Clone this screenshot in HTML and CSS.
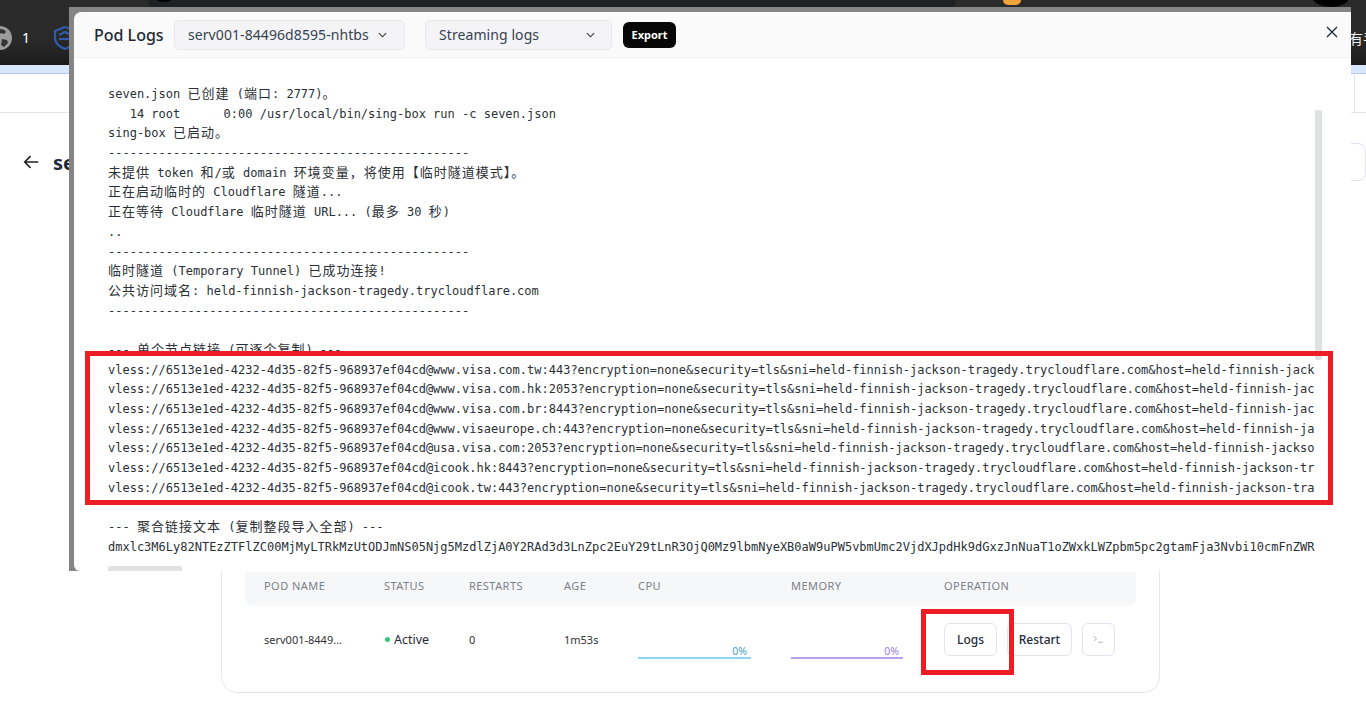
FILE: index.html
```html
<!DOCTYPE html>
<html lang="zh">
<head>
<meta charset="utf-8">
<title>Pod Logs</title>
<link rel="stylesheet" href="styles.css">
</head>
<body>
<div class="page">
  <header class="topbar">
    <span class="top-pill"></span>
    <span class="top-dot-left"></span>
    <span class="top-orange"></span>
    <span class="top-circle"></span>
    <svg class="globe" viewBox="0 0 24 24"><circle cx="12" cy="12" r="12" fill="#9b9b9b"/><path d="M12 3c3 0 5 1 6 3l-2 2-3-1-2 2 1 2-3 1-3-2c0-4 3-7 6-7zM14 13l5 1 1 3-4 4-3-2z" fill="#333"/></svg>
    <span class="tab-count">1</span>
    <svg class="shield" viewBox="0 0 24 24" fill="none" stroke="#2f5cab" stroke-width="2.2"><path d="M2 5 12 1l10 4v7c0 5-5 9-10 11C7 21 2 17 2 12z"/><path d="M6 9l6-3 6 3M6 13l10 0"/></svg>
    <span class="top-cjk">有手</span>
  </header>
  <div class="strip"></div>
  <nav class="navrow"><span class="nav-line"></span></nav>
  <main class="content">
    <div class="title-row">
      <svg class="back" viewBox="0 0 20 20" fill="none" stroke="#222" stroke-width="1.8"><path d="M18 10H3M9.500 3.500 3 10l6.500 6.500"/></svg>
      <h1 class="title">seven</h1>
      <span class="side-btn"></span>
    </div>
    <section class="card">
      <div class="grid head">
        <span>POD NAME</span><span>STATUS</span><span>RESTARTS</span><span>AGE</span><span>CPU</span><span>MEMORY</span><span>OPERATION</span>
      </div>
      <div class="grid row">
        <span class="pod">serv001-8449...</span>
        <span class="status"><i class="dot"></i>Active</span>
        <span>0</span>
        <span>1m53s</span>
        <div class="meter cpu"><em>0%</em></div>
        <div class="meter mem"><em>0%</em></div>
        <div class="ops">
          <button class="btn logs">Logs</button>
          <button class="btn restart">Restart</button>
          <button class="btn term"><svg viewBox="0 0 12 10" fill="none" stroke="#9ca3af" stroke-width=".9"><path d="M1 1.500 4 4 1 6.500M5.500 8H11"/></svg></button>
        </div>
      </div>
    </section>
  </main>
</div>

<div class="backdrop">
  <div class="modal">
    <div class="modal-head">
      <h2 class="modal-title">Pod Logs</h2>
      <div class="select pod-select"><span>serv001-84496d8595-nhtbs</span><svg class="chev" viewBox="0 0 10 6" fill="none" stroke="#333" stroke-width="1.200"><path d="M1 1l4 4 4-4"/></svg></div>
      <div class="select mode-select"><span>Streaming logs</span><svg class="chev" viewBox="0 0 10 6" fill="none" stroke="#333" stroke-width="1.200"><path d="M1 1l4 4 4-4"/></svg></div>
      <button class="export">Export</button>
      <svg class="close" viewBox="0 0 12 12" fill="none" stroke="#1f2937" stroke-width="1.300"><path d="M1 1l10 10M11 1 1 11"/></svg>
    </div>
    <div class="log-body">
      <div class="log">
        <div class="line">seven.json <span class="zh">已创建</span> (<span class="zh">端口</span>: 2777)<span class="zh">。</span></div>
        <div class="line">   14 root      0:00 /usr/local/bin/sing-box run -c seven.json</div>
        <div class="line">sing-box <span class="zh">已启动。</span></div>
        <div class="line">--------------------------------------------------</div>
        <div class="line"><span class="zh">未提供</span> token <span class="zh">和</span>/<span class="zh">或</span> domain <span class="zh">环境变量，将使用【临时隧道模式】。</span></div>
        <div class="line"><span class="zh">正在启动临时的</span> Cloudflare <span class="zh">隧道</span>...</div>
        <div class="line"><span class="zh">正在等待</span> Cloudflare <span class="zh">临时隧道</span> URL... (<span class="zh">最多</span> 30 <span class="zh">秒</span>)</div>
        <div class="line">..</div>
        <div class="line">--------------------------------------------------</div>
        <div class="line"><span class="zh">临时隧道</span> (Temporary Tunnel) <span class="zh">已成功连接</span>!</div>
        <div class="line"><span class="zh">公共访问域名</span>: held-finnish-jackson-tragedy.trycloudflare.com</div>
        <div class="line">--------------------------------------------------</div>
        <div class="line"></div>
        <div class="line">--- <span class="zh">单个节点链接</span> (<span class="zh">可逐个复制</span>) ---</div>
        <div class="line">vless://6513e1ed-4232-4d35-82f5-968937ef04cd@www.visa.com.tw:443?encryption=none&amp;security=tls&amp;sni=held-finnish-jackson-tragedy.trycloudflare.com&amp;host=held-finnish-jackson-tragedy.trycloudflare.com</div>
        <div class="line">vless://6513e1ed-4232-4d35-82f5-968937ef04cd@www.visa.com.hk:2053?encryption=none&amp;security=tls&amp;sni=held-finnish-jackson-tragedy.trycloudflare.com&amp;host=held-finnish-jackson-tragedy.trycloudflare.com</div>
        <div class="line">vless://6513e1ed-4232-4d35-82f5-968937ef04cd@www.visa.com.br:8443?encryption=none&amp;security=tls&amp;sni=held-finnish-jackson-tragedy.trycloudflare.com&amp;host=held-finnish-jackson-tragedy.trycloudflare.com</div>
        <div class="line">vless://6513e1ed-4232-4d35-82f5-968937ef04cd@www.visaeurope.ch:443?encryption=none&amp;security=tls&amp;sni=held-finnish-jackson-tragedy.trycloudflare.com&amp;host=held-finnish-jackson-tragedy.trycloudflare.com</div>
        <div class="line">vless://6513e1ed-4232-4d35-82f5-968937ef04cd@usa.visa.com:2053?encryption=none&amp;security=tls&amp;sni=held-finnish-jackson-tragedy.trycloudflare.com&amp;host=held-finnish-jackson-tragedy.trycloudflare.com</div>
        <div class="line">vless://6513e1ed-4232-4d35-82f5-968937ef04cd@icook.hk:8443?encryption=none&amp;security=tls&amp;sni=held-finnish-jackson-tragedy.trycloudflare.com&amp;host=held-finnish-jackson-tragedy.trycloudflare.com</div>
        <div class="line">vless://6513e1ed-4232-4d35-82f5-968937ef04cd@icook.tw:443?encryption=none&amp;security=tls&amp;sni=held-finnish-jackson-tragedy.trycloudflare.com&amp;host=held-finnish-jackson-tragedy.trycloudflare.com</div>
        <div class="line"></div>
        <div class="line">--- <span class="zh">聚合链接文本</span> (<span class="zh">复制整段导入全部</span>) ---</div>
        <div class="line">dmxlc3M6Ly82NTEzZTFlZC00MjMyLTRkMzUtODJmNS05Njg5MzdlZjA0Y2RAd3d3LnZpc2EuY29tLnR3OjQ0Mz9lbmNyeXB0aW9uPW5vbmUmc2VjdXJpdHk9dGxzJnNuaT1oZWxkLWZpbm5pc2gtamFja3Nvbi10cmFnZWR5LnRyeWNsb3VkZmxhcmUuY29t</div>
      </div>
      <span class="scroll-v"></span>
      <span class="scroll-h"></span>
    </div>
  </div>
</div>

<div class="mark mark-links"></div>
<div class="mark mark-logs"></div>
</body>
</html>
```
FILE: styles.css
```css
* { box-sizing: border-box; }
html, body { margin: 0; height: 100%; }
body {
  position: relative;
  height: 727px;
  overflow: hidden;
  background: #fff;
  font-family: "Noto Sans", "Noto Sans CJK SC", sans-serif;
  color: #1f2937;
}
.page { height: 727px; display: flex; flex-direction: column; overflow: hidden; }

/* browser bar */
.topbar {
  position: relative;
  flex: none;
  height: 65px;
  padding-top: 10px;
  display: flex;
  align-items: center;
  background: linear-gradient(#2b2b2b, #2a2a2a 60%, #1b1b1b);
  overflow: hidden;
}
.top-pill { position: absolute; left: 148px; top: 0; width: 808px; height: 10px; background: #1f2024; border-radius: 0 0 12px 12px; }
.top-dot-left { position: absolute; left: 155px; top: -9px; width: 18px; height: 11px; background: #000; border-radius: 50%; }
.top-orange { position: absolute; left: 1003px; top: -6px; width: 18px; height: 11px; background: #f2a33c; border-radius: 5px; }
.top-circle { position: absolute; left: 1313px; top: -11px; width: 36px; height: 18px; background: #000; border-radius: 50%; }
.globe { flex: none; width: 24px; height: 24px; margin-left: -12px; }
.tab-count { flex: none; margin-left: 10px; width: 10px; color: #fff; font-size: 14px; line-height: 20px; }
.shield { flex: none; width: 24px; height: 24px; margin-left: 21px; }
.top-cjk { flex: none; margin-left: auto; margin-right: -11px; color: #f2f2f2; font-size: 14px; }
.strip { flex: none; height: 9px; background: #d9e6ff; border-bottom: 1px solid #b3ccfb; }
.navrow { flex: none; height: 39px; border-bottom: 1px solid #e5e7eb; display: flex; justify-content: flex-end; }
.nav-line { width: 1px; margin-right: 11px; background: #e5e7eb; }

/* page under the dialog */
.content { flex: 1; padding-left: 22px; }
.title-row { height: 38px; margin-top: 30px; display: flex; align-items: center; gap: 13px; }
.back { flex: none; width: 18px; height: 18px; }
.title { margin: 0; font-size: 20px; font-weight: 700; color: #1f2937; }
.side-btn { margin-left: auto; width: 60px; height: 38px; border: 1px solid #dfe3f0; border-radius: 8px; }
.card {
  width: 939px;
  margin: 309px 0 0 199px;
  height: 203px;
  padding: 81px 23px 0;
  border: 1px solid #e5e7eb;
  border-radius: 16px;
}
.grid {
  display: grid;
  grid-template-columns: 120px 85px 95px 74px 153px 153px 1fr;
  align-items: center;
  padding-left: 19px;
  font-size: 11px;
}
.head { height: 34px; padding-bottom: 7px; background: #f6f7f9; border-radius: 0 0 8px 8px; color: #7b7f88; letter-spacing: .45px; }
.row { height: 68px; padding-bottom: 2px; color: #333; }
.pod { color: #333; }
.status { display: flex; align-items: center; font-size: 12.5px; color: #1f2937; }
.dot { width: 5px; height: 5px; margin: 0 4px 0 1px; border-radius: 50%; background: #34c77b; }
.meter { position: relative; width: 113px; height: 2px; margin-top: 38px; }
.meter em { position: absolute; right: 4px; bottom: 1px; font-style: normal; font-size: 10.5px; line-height: 14px; }
.cpu { background: #8fd6f5; }
.cpu em { color: #4aa3c7; }
.mem { width: 112px; background: #b9a0ea; }
.mem em { color: #9d83e8; }
.ops { display: flex; gap: 10px; align-items: center; }
.btn {
  height: 33px;
  padding: 0;
  background: #fff;
  border: 1px solid #e3e4ee;
  border-radius: 6px;
  color: #1f2937;
  font: 500 12px "Noto Sans", sans-serif;
}
.logs { width: 53px; }
.restart { width: 65px; }
.term { width: 33px; display: flex; align-items: center; justify-content: center; }
.term svg { width: 11px; height: 9px; }

/* dialog */
.backdrop {
  position: absolute;
  left: 69px;
  top: 7px;
  width: 1282px;
  height: 564px;
  padding: 5px 0 0 5px;
  background: #858585;
}
.modal { height: 100%; display: flex; flex-direction: column; background: #fff; border-radius: 8px 0 0 6px; overflow: hidden; }
.modal-head {
  flex: none;
  height: 46px;
  padding-left: 20px;
  display: flex;
  align-items: center;
  background: #fafafa;
  border-bottom: 1px solid #f1f1f1;
}
.modal-title { margin: 0 10px 0 0; width: 70px; font-size: 16px; font-weight: 500; color: #1f2937; white-space: nowrap; }
.select {
  height: 30px;
  display: flex;
  align-items: center;
  justify-content: space-between;
  background: #f4f4f6;
  border: 1px solid #e7e8ec;
  border-radius: 5px;
  font-size: 14px;
  letter-spacing: .08px;
  color: #374151;
}
.pod-select { width: 231px; padding: 0 17px 0 13px; margin-right: 20px; }
.mode-select { width: 187px; padding: 0 16px 0 13px; margin-right: 11px; }
.chev { width: 9px; height: 6px; flex: none; }
.export {
  width: 53px;
  height: 26px;
  padding: 0;
  border: 0;
  border-radius: 6px;
  background: #070707;
  color: #fff;
  font: 700 11px "Noto Sans", sans-serif;
}
.close { width: 12px; height: 12px; margin: -5px 13px 0 auto; }
.log-body { position: relative; flex: 1; padding: 23px 36px 0 34px; overflow: hidden; }
.log {
  padding-top: 4px;
  overflow: hidden;
  font-family: "DejaVu Sans Mono", "Noto Sans CJK TC", monospace;
  font-size: 12px;
  color: #2b3036;
}
.line { height: 19.7px; line-height: 19.7px; white-space: pre; }
.zh { font-family: "Noto Sans CJK TC", "Noto Sans CJK SC", sans-serif; font-size: 13px; line-height: 1; letter-spacing: 1px; }
.scroll-v { position: absolute; right: 29px; top: 52px; width: 7px; height: 250px; background: #dfe1e3; border-radius: 2px; }
.scroll-h { position: absolute; left: 34px; bottom: 0; width: 74px; height: 5px; background: #dfe1e3; border-radius: 2px 2px 0 0; }

/* red annotations */
.mark { position: absolute; border: 5px solid #ee1c25; }
.mark-links { left: 85px; top: 351px; width: 1248px; height: 154px; }
.mark-logs { left: 921px; top: 609px; width: 93px; height: 66px; }
```
